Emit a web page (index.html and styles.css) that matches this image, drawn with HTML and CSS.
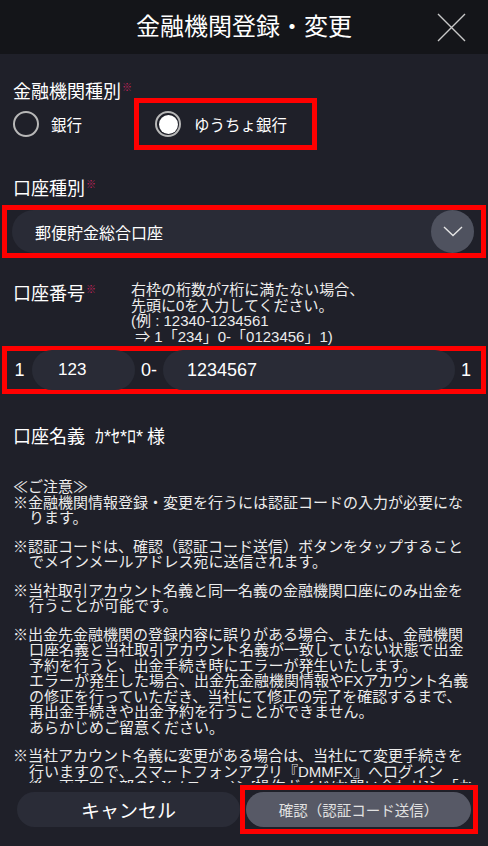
FILE: index.html
```html
<!DOCTYPE html>
<html lang="ja">
<head>
    <meta charset="UTF-8">
    <meta name="viewport" content="width=device-width, initial-scale=1.0">
    <title>金融機関登録・変更</title>
    <link rel="stylesheet" href="styles.css">
</head>
<body>

    <header class="topbar">
        <span></span>
        <h1 class="title">金融機関登録・変更</h1>
        <button class="close-btn" aria-label="閉じる">
            <svg width="29" height="29" viewBox="0 0 29 29">
                <path d="M1 1 L28 28 M28 1 L1 28" stroke="#c8c8c8" stroke-width="1.4" fill="none"/>
            </svg>
        </button>
    </header>

    <main class="form">
        <div class="label">金融機関種別<span class="req">※</span></div>
        <div class="radio-row">
            <label class="radio-opt"><span class="radio"></span>銀行</label>
            <label class="radio-opt marked"><span class="radio checked"></span>ゆうちょ銀行</label>
        </div>

        <div class="label kind-label">口座種別<span class="req">※</span></div>
        <div class="marked select-wrap">
            <div class="select">
                <span class="select-text">郵便貯金総合口座</span>
                <span class="select-btn">
                    <svg width="20" height="11" viewBox="0 0 20 11">
                        <path d="M1 1 L10 9.5 L19 1" stroke="#e6e6e6" stroke-width="1.4" fill="none"/>
                    </svg>
                </span>
            </div>
        </div>

        <div class="number-head">
            <div class="label">口座番号<span class="req">※</span></div>
            <p class="hint">右枠の桁数が7桁に満たない場合、<br>先頭に0を入力してください。<br>(例 : 12340-1234561<br>&nbsp;⇒ 1「234」0-「0123456」1)</p>
        </div>
        <div class="marked number-row">
            <span class="fix">1</span>
            <span class="pill short">123</span>
            <span class="fix sep">0-</span>
            <span class="pill long">1234567</span>
            <span class="fix tail">1</span>
        </div>

        <div class="label name-label">口座名義<span class="kana">ｶ*ｾ*ﾛ*</span>様</div>

        <div class="notes">
            <p class="note-head">≪ご注意≫</p>
            <p class="note">※金融機関情報登録・変更を行うには認証コードの入力が必要になります。</p>
            <p class="note">※認証コードは、確認（認証コード送信）ボタンをタップすることでメインメールアドレス宛に送信されます。</p>
            <p class="note">※当社取引アカウント名義と同一名義の金融機関口座にのみ出金を行うことが可能です。</p>
            <p class="note">※出金先金融機関の登録内容に誤りがある場合、または、金融機関口座名義と当社取引アカウント名義が一致していない状態で出金予約を行うと、出金手続き時にエラーが発生いたします。<br>エラーが発生した場合、出金先金融機関情報やFXアカウント名義の修正を行っていただき、当社にて修正の完了を確認するまで、再出金手続きや出金予約を行うことができません。<br>あらかじめご留意ください。</p>
            <p class="note">※当社アカウント名義に変更がある場合は、当社にて変更手続きを行いますので、スマートフォンアプリ『DMMFX』へログイン<br>後、画面右上部の[≡](メニュー)＞[操作ガイド/お問い合わせ]＞「お客様情報変更」よりお手続きください。</p>
        </div>
    </main>

    <footer class="actions">
        <button class="btn cancel">キャンセル</button>
        <div class="marked confirm-wrap">
            <button class="btn confirm">確認（認証コード送信）</button>
        </div>
    </footer>

</body>
</html>
```

FILE: styles.css
```css
body {
    margin: 0;
    height: 100vh;
    display: flex;
    flex-direction: column;
    overflow: hidden;
    background: #1f2029;
    color: #fff;
    font-family: "Liberation Sans", "Noto Sans CJK JP", sans-serif;
}

.topbar {
    height: 54px;
    flex-shrink: 0;
    background: #141519;
    display: grid;
    grid-template-columns: 1fr auto 1fr;
    align-items: center;
}

.title {
    margin: 0;
    font-size: 24px;
    font-weight: normal;
    line-height: 1;
}

.close-btn {
    justify-self: end;
    margin-right: 22px;
    padding: 0;
    background: none;
    border: none;
    width: 29px;
    height: 29px;
    display: flex;
}

.form {
    flex: 1;
    min-height: 0;
    overflow: hidden;
    padding: 28px 13px 0;
}

.label {
    font-size: 18px;
    line-height: 20px;
}

.req {
    color: #c2245c;
    font-size: 10px;
    vertical-align: top;
    line-height: 12px;
    margin-left: 1px;
}

.marked {
    border: 5px solid #ff0000;
    box-sizing: border-box;
}

/* radios */
.radio-row {
    display: flex;
    align-items: center;
    height: 52px;
    margin-top: -4px;
}

.radio-opt {
    display: flex;
    align-items: center;
    gap: 12px;
    font-size: 15.5px;
    width: 121px;
}

.radio-opt.marked {
    width: 183px;
    height: 52px;
    padding-left: 16px;
    gap: 13px;
}

.radio {
    width: 26px;
    height: 26px;
    box-sizing: border-box;
    border: 2px solid #b8b8b8;
    border-radius: 50%;
    display: flex;
    align-items: center;
    justify-content: center;
}

.radio.checked::after {
    content: "";
    width: 19px;
    height: 19px;
    border-radius: 50%;
    background: #fff;
}

/* select */
.kind-label {
    margin-top: 29px;
}

.select-wrap {
    margin: 6px -11px 0;
    height: 53px;
    padding: 0 7px 0 5px;
    display: flex;
    align-items: center;
}

.select {
    flex: 1;
    height: 43px;
    background: #292b36;
    border-radius: 22px;
    display: flex;
    align-items: center;
    padding-left: 23px;
}

.select-text {
    font-size: 16px;
}

.select-btn {
    margin-left: auto;
    width: 43px;
    height: 43px;
    border-radius: 50%;
    background: #4f525f;
    display: flex;
    align-items: center;
    justify-content: center;
}

/* account number */
.number-head {
    display: flex;
    margin-top: 24px;
}

.number-head .label {
    width: 118px;
    padding-top: 2px;
    flex-shrink: 0;
}

.hint {
    margin: 0;
    font-size: 15px;
    line-height: 15.5px;
    color: #ececec;
}

.number-row {
    margin: 2px -11px 0;
    height: 48px;
    display: flex;
    align-items: center;
    font-size: 18px;
}

.fix {
    width: 25px;
    text-align: center;
}

.sep {
    width: 28px;
}

.tail {
    width: 26px;
    text-align: left;
    padding-left: 6px;
    box-sizing: border-box;
}

.pill {
    height: 40px;
    background: #292b36;
    border-radius: 20px;
    display: flex;
    align-items: center;
    font-size: 17px;
    box-sizing: border-box;
}

.pill.short {
    width: 103px;
    padding-left: 26px;
}

.pill.long {
    flex: 1;
    padding-left: 24px;
    font-size: 18px;
}

/* account name */
.name-label {
    margin-top: 33px;
}

.kana {
    margin: 0 4px 0 10px;
}

/* notes */
.notes {
    margin-top: 32px;
    font-size: 15px;
    line-height: 15.5px;
    color: #ececec;
}

.notes p {
    margin: 13px 0 0;
}

.notes .note-head {
    margin-top: 0;
}

.notes .note-head + .note {
    margin-top: 0;
}

.note {
    padding-left: 16px;
    text-indent: -16px;
}

/* footer buttons */
.actions {
    flex-shrink: 0;
    height: 63px;
    box-sizing: border-box;
    padding: 2px 10px 12px 17px;
    display: flex;
    align-items: center;
}

.btn {
    font-family: inherit;
    border: none;
    height: 35px;
    border-radius: 18px;
    color: #fff;
    padding: 0;
}

.cancel {
    width: 223px;
    background: #2a2c37;
    font-size: 19px;
}

.confirm-wrap {
    width: 238px;
    height: 49px;
    padding: 0 2px 0 1px;
    display: flex;
    align-items: center;
}

.confirm {
    width: 100%;
    background: #575966;
    font-size: 14.5px;
    color: #e2e2e2;
}
```
